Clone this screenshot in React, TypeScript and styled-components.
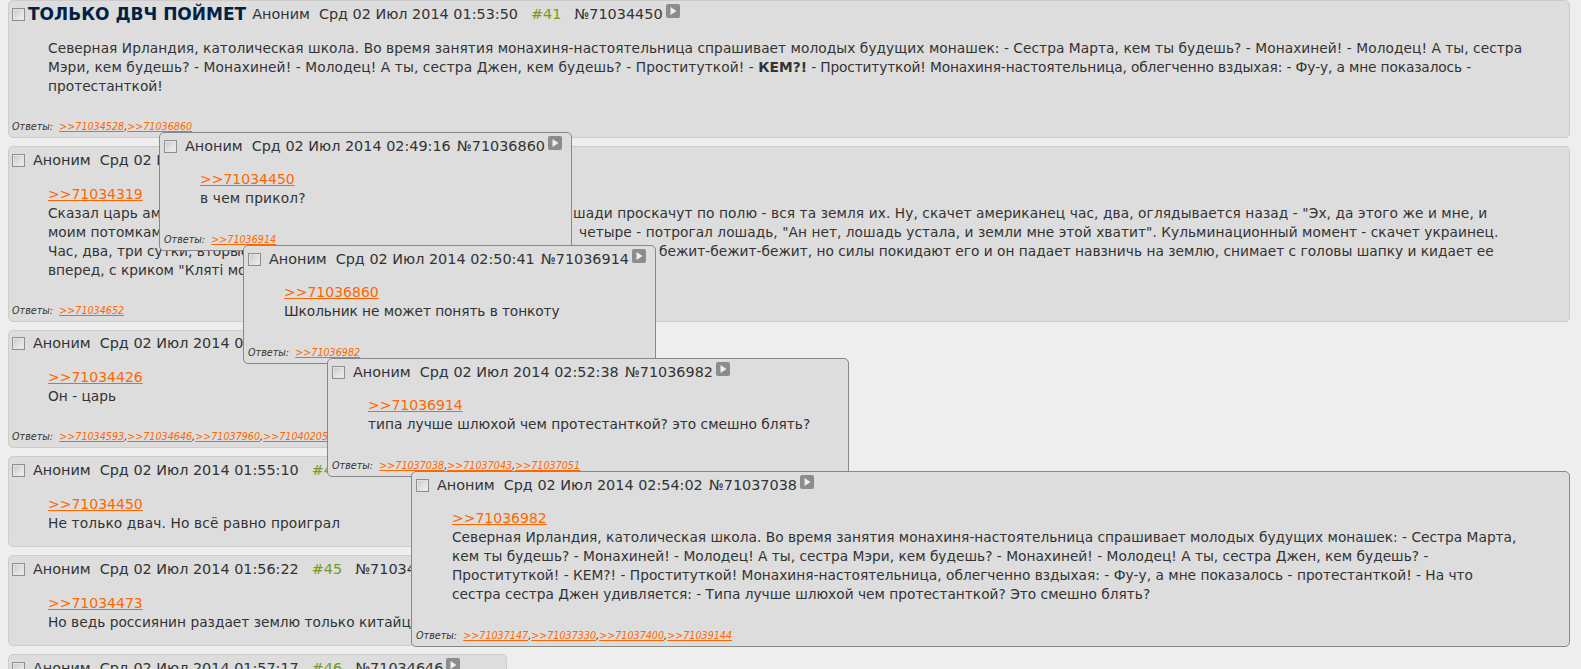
import React from "react";
import styled, { createGlobalStyle } from "styled-components";

const Global = createGlobalStyle`
  html, body { margin: 0; padding: 0; background: #eeeeee; overflow: hidden; height: 100%; }
  body { padding: 0 11px 0 8px; color: #333333; font: 13.75px/19px "DejaVu Sans", Verdana, sans-serif; }
`;
const Page = styled.div`position: relative; height: 669px; overflow: hidden;`;
const Thread = styled.div`display: flex; flex-direction: column; gap: 8px; align-items: flex-start;`;
const Body = styled.div`margin: 14px 0 13px 39px;`;
const Head = styled.div`
  display: flex;
  align-items: center;
  box-sizing: border-box;
  height: 23.8px;
  padding: 3px 0 0 3px;
  font-size: 14.4px;
  white-space: pre;
`;
const Card = styled.article<{ $w?: number }>`
  box-sizing: border-box;
  width: ${p => (p.$w ? `${p.$w}px` : "100%")};
  flex: none;
  background: #dddddd;
  border: 1px solid #cccccc;
  border-radius: 5px;
`;
const Popup = styled(Card)<{ $x: number; $y: number; $pw?: number }>`
  position: absolute;
  left: ${p => p.$x}px;
  top: ${p => p.$y}px;
  width: ${p => (p.$pw ? `${p.$pw}px` : "auto")};
  padding-left: 1px;
  border-color: #888888;
  ${Body} { margin: 13px 0 14px 39px; }
`;
const Check = styled.span`
  flex: none;
  box-sizing: border-box;
  width: 13px;
  height: 13px;
  margin-right: 8px;
  border: 1px solid #8f8f8f;
  background: linear-gradient(135deg, #c8c8c8, #f4f4f4);
  box-shadow: inset 0 0 0 1px #e4e4e4;
`;
const Title = styled.span`
  font-size: 17px;
  font-weight: 700;
  color: #002244;
  margin-left: -5px;
  margin-right: 6px;
`;
const Name = styled.span`margin-right: 9px;`;
const Num = styled.span`color: #789922; margin-left: 13px; margin-right: 13px;`;
const Play = styled.svg`flex: none; margin: -5px 0 0 3px;`;
const Line = styled.div<{ $s?: number }>`
  white-space: pre;
  letter-spacing: ${p => p.$s ?? 0}px;
`;
const Adj = styled.span<{ $s: number }>`letter-spacing: ${p => p.$s}px;`;
const Hidden = styled.span<{ $w: number }>`
  display: inline-block;
  width: ${p => p.$w}px;
  height: 19px;
  overflow: hidden;
  vertical-align: top;
  letter-spacing: 0;
`;
const Ref = styled.a`color: #ff6600; text-decoration: underline; font-size: 14px;`;
const Replies = styled.div`
  height: 28px;
  box-sizing: border-box;
  padding: 11px 0 0 3px;
  font-size: 9.6px;
  line-height: 14px;
  font-style: italic;
  white-space: pre;
`;
const Small = styled.a`color: #ff6600; text-decoration: underline;`;
const Gap = styled.span<{ $w: number }>`display: inline-block; width: ${p => p.$w}px;`;

const PlayIcon = () => (
  <Play width="15" height="15" viewBox="0 0 15 15">
    <rect width="14" height="14" rx="2" fill="#8c8c8c" />
    <path d="M4.5 3v8l6-4z" fill="#eeeeee" />
  </Play>
);

const Header = ({ title, date, n, no }: { title?: string; date: string; n?: string; no: string }) => (
  <Head>
    <Check />
    {title && <Title>{title}</Title>}
    <Name>Аноним</Name>
    <span>{date}</span>
    {n ? <Num>{n}</Num> : <Gap $w={6} />}
    <span>№{no}</span>
    <PlayIcon />
  </Head>
);

const Reply = ({ ids }: { ids: string[] }) => (
  <Replies>
    Ответы:  {ids.map((id, i) => (
      <React.Fragment key={id}>
        {i > 0 && ","}
        <Small>&gt;&gt;{id}</Small>
      </React.Fragment>
    ))}
  </Replies>
);

export default function App() {
  return (
    <Page>
      <Global />
      <Thread>
        <Card>
          <Header title="ТОЛЬКО ДВЧ ПОЙМЕТ" date="Срд 02 Июл 2014 01:53:50" n="#41" no="71034450" />
          <Body>
            <Line $s={0.05}>Северная Ирландия, католическая школа. Во время занятия монахиня-настоятельница спрашивает молодых будущих монашек: - Сестра Марта, кем ты будешь? - Монахиней! - Молодец! А ты, сестра</Line>
            <Line><Adj $s={0.1}>Мэри, кем будешь? - Монахиней! - Молодец! А ты, сестра Джен, кем будешь? - Проституткой! - </Adj><b>КЕМ?!</b><Adj $s={-0.14}> - Проституткой! Монахиня-настоятельница, облегченно вздыхая: - Фу-у, а мне показалось -</Adj></Line>
            <Line>протестанткой!</Line>
          </Body>
          <Reply ids={["71034528", "71036860"]} />
        </Card>
        <Card>
          <Header date="Срд 02 Июл 2014 01:53:58" n="#42" no="71034473" />
          <Body>
            <Line><Ref>&gt;&gt;71034319</Ref></Line>
            <Line $s={0.075}><Hidden $w={525}>Сказал царь американцу, русскому и украинцу: на сколько ваши ло</Hidden>шади проскачут по полю - вся та земля их. Ну, скачет американец час, два, оглядывается назад - "Эх, да этого же и мне, и</Line>
            <Line $s={0.035}><Hidden $w={531}>моим потомкам хватит". Скачет русский час, два, три,</Hidden>четыре - потрогал лошадь, "Ан нет, лошадь устала, и земли мне этой хватит". Кульминационный момент - скачет украинец.</Line>
            <Line><Hidden $w={611}>Час, два, три сутки, вторые, лошадь пала, он сам бежит-бежит,</Hidden>бежит-бежит-бежит, но силы покидают его и он падает навзничь на землю, снимает с головы шапку и кидает ее</Line>
            <Line>вперед, с криком "Кляті москалі, хай буде моє!"</Line>
          </Body>
          <Reply ids={["71034652"]} />
        </Card>
        <Card $w={540}>
          <Header date="Срд 02 Июл 2014 01:54:42" n="#43" no="71034593" />
          <Body>
            <Line><Ref>&gt;&gt;71034426</Ref></Line>
            <Line>Он - царь</Line>
          </Body>
          <Reply ids={["71034593", "71034646", "71037960", "71040205"]} />
        </Card>
        <Card $w={700}>
          <Header date="Срд 02 Июл 2014 01:55:10" n="#44" no="71034600" />
          <Body>
            <Line><Ref>&gt;&gt;71034450</Ref></Line>
            <Line $s={0.13}>Не только двач. Но всё равно проиграл</Line>
          </Body>
        </Card>
        <Card $w={700}>
          <Header date="Срд 02 Июл 2014 01:56:22" n="#45" no="71034620" />
          <Body>
            <Line><Ref>&gt;&gt;71034473</Ref></Line>
            <Line>Но ведь россиянин раздает землю только китайцам</Line>
          </Body>
        </Card>
        <Card $w={499}>
          <Header date="Срд 02 Июл 2014 01:57:17" n="#46" no="71034646" />
        </Card>
      </Thread>

      <Popup $x={151} $y={132} $pw={413}>
        <Header date="Срд 02 Июл 2014 02:49:16" no="71036860" />
        <Body>
          <Line><Ref>&gt;&gt;71034450</Ref></Line>
          <Line $s={0.2}>в чем прикол?</Line>
        </Body>
        <Reply ids={["71036914"]} />
      </Popup>
      <Popup $x={235} $y={245} $pw={413}>
        <Header date="Срд 02 Июл 2014 02:50:41" no="71036914" />
        <Body>
          <Line><Ref>&gt;&gt;71036860</Ref></Line>
          <Line $s={-0.09}>Школьник не может понять в тонкоту</Line>
        </Body>
        <Reply ids={["71036982"]} />
      </Popup>
      <Popup $x={319} $y={358} $pw={522}>
        <Header date="Срд 02 Июл 2014 02:52:38" no="71036982" />
        <Body>
          <Line><Ref>&gt;&gt;71036914</Ref></Line>
          <Line>типа лучше шлюхой чем протестанткой? это смешно блять?</Line>
        </Body>
        <Reply ids={["71037038", "71037043", "71037051"]} />
      </Popup>
      <Popup $x={403} $y={471} $pw={1159}>
        <Header date="Срд 02 Июл 2014 02:54:02" no="71037038" />
        <Body>
          <Line><Ref>&gt;&gt;71036982</Ref></Line>
          <Line>Северная Ирландия, католическая школа. Во время занятия монахиня-настоятельница спрашивает молодых будущих монашек: - Сестра Марта,</Line>
          <Line>кем ты будешь? - Монахиней! - Молодец! А ты, сестра Мэри, кем будешь? - Монахиней! - Молодец! А ты, сестра Джен, кем будешь? -</Line>
          <Line>Проституткой! - КЕМ?! - Проституткой! Монахиня-настоятельница, облегченно вздыхая: - Фу-у, а мне показалось - протестанткой! - На что</Line>
          <Line>сестра сестра Джен удивляется: - Типа лучше шлюхой чем протестанткой? Это смешно блять?</Line>
        </Body>
        <Reply ids={["71037147", "71037330", "71037400", "71039144"]} />
      </Popup>
    </Page>
  );
}
